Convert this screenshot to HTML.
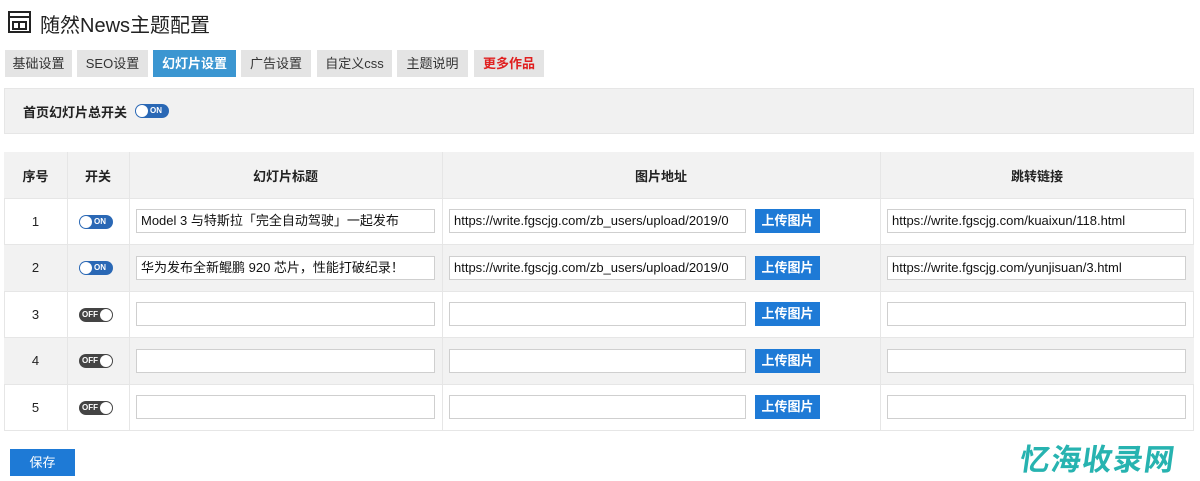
<!DOCTYPE html>
<html><head><meta charset="utf-8"><style>
*{box-sizing:border-box;margin:0;padding:0}
body{width:1200px;height:481px;background:#fff;font-family:"Liberation Sans","Noto Sans CJK SC",sans-serif;color:#222;position:relative;overflow:hidden}
.a{position:absolute}
.tab{position:absolute;top:50px;height:27px;background:#e4e4e4;font-size:13px;line-height:27px;text-align:center;color:#333}
.row{position:absolute;left:4px;width:1190px;height:47px;border-top:1px solid #e6e6e6}
.g{background:#f2f2f2}
.vl{position:absolute;top:152px;height:279px;width:1px;background:#e6e6e6}
.inp{position:absolute;height:24px;background:#fff;border:1px solid #cfcfcf;font-size:13px;line-height:22px;padding-left:4px;white-space:nowrap;overflow:hidden;color:#111}
.btn{position:absolute;height:24px;width:65px;background:#1e7ad6;color:#fff;font-size:13px;font-weight:bold;line-height:24px;text-align:center}
.num{position:absolute;left:0;width:63px;text-align:center;font-size:13px;top:15px}
.on,.off{position:absolute;left:75px;top:16px;width:34px;height:14px;border-radius:7px}
.on{background:#2a68b5}
.on:before{content:"";position:absolute;left:1px;top:1px;width:12px;height:12px;border-radius:6px;background:#fff}
.on:after{content:"ON";position:absolute;left:15px;top:1px;font-size:8px;font-weight:bold;color:#fff;line-height:12px}
.off{background:#444}
.off:before{content:"";position:absolute;right:1px;top:1px;width:12px;height:12px;border-radius:6px;background:#fff}
.off:after{content:"OFF";position:absolute;left:3px;top:1px;font-size:8px;font-weight:bold;color:#fff;line-height:12px}
</style></head><body>
<svg class="a" style="left:8px;top:11px" width="23" height="22" viewBox="0 0 23 22"><rect x="1" y="1" width="21" height="20" fill="none" stroke="#222" stroke-width="2"/><rect x="1" y="5" width="21" height="2" fill="#222"/><path d="M5 11h13v7H5zM11 11v7" fill="none" stroke="#222" stroke-width="2"/></svg>
<div class="a" style="left:40px;top:9px;font-size:20px;color:#222">随然News主题配置</div>
<div class="tab" style="left:5px;width:67px">基础设置</div>
<div class="tab" style="left:77px;width:71px">SEO设置</div>
<div class="tab" style="left:153px;width:83px;background:#3b96d1;color:#fff;font-weight:bold">幻灯片设置</div>
<div class="tab" style="left:241px;width:70px">广告设置</div>
<div class="tab" style="left:317px;width:75px">自定义css</div>
<div class="tab" style="left:397px;width:71px">主题说明</div>
<div class="tab" style="left:474px;width:70px;color:#e02020;font-weight:bold">更多作品</div>
<div class="a" style="left:4px;top:88px;width:1190px;height:46px;background:#f1f1f1;border:1px solid #e6e6e6"></div>
<div class="a" style="left:23px;top:102px;font-size:13px;font-weight:bold">首页幻灯片总开关</div>
<div class="on" style="left:135px;top:104px"></div>
<div class="a" style="left:4px;top:152px;width:1190px;height:279px;border:1px solid #e6e6e6"></div>
<div class="row g" style="top:152px;height:46px;border-top:none;font-size:13px;font-weight:bold">
<div class="a" style="left:0;width:63px;text-align:center;top:14px">序号</div>
<div class="a" style="left:63px;width:62px;text-align:center;top:14px">开关</div>
<div class="a" style="left:125px;width:313px;text-align:center;top:14px">幻灯片标题</div>
<div class="a" style="left:438px;width:438px;text-align:center;top:14px">图片地址</div>
<div class="a" style="left:876px;width:314px;text-align:center;top:14px">跳转链接</div>
</div>
<div class="row" style="top:198px"><div class="num">1</div><div class="on"></div></div>
<div class="row g" style="top:244px"><div class="num">2</div><div class="on"></div></div>
<div class="row" style="top:291px"><div class="num">3</div><div class="off"></div></div>
<div class="row g" style="top:337px"><div class="num">4</div><div class="off"></div></div>
<div class="row" style="top:384px"><div class="num">5</div><div class="off"></div></div>
<div class="vl" style="left:67px"></div><div class="vl" style="left:129px"></div><div class="vl" style="left:442px"></div><div class="vl" style="left:880px"></div>

<div class="inp" style="left:136px;top:209px;width:299px">Model 3 与特斯拉「完全自动驾驶」一起发布</div>
<div class="inp" style="left:449px;top:209px;width:297px">https://write.fgscjg.com/zb_users/upload/2019/0</div>
<div class="btn" style="left:755px;top:209px">上传图片</div>
<div class="inp" style="left:887px;top:209px;width:299px">https://write.fgscjg.com/kuaixun/118.html</div>

<div class="inp" style="left:136px;top:256px;width:299px">华为发布全新鲲鹏 920 芯片，性能打破纪录！</div>
<div class="inp" style="left:449px;top:256px;width:297px">https://write.fgscjg.com/zb_users/upload/2019/0</div>
<div class="btn" style="left:755px;top:256px">上传图片</div>
<div class="inp" style="left:887px;top:256px;width:299px">https://write.fgscjg.com/yunjisuan/3.html</div>

<div class="inp" style="left:136px;top:302px;width:299px"></div><div class="inp" style="left:449px;top:302px;width:297px"></div><div class="btn" style="left:755px;top:302px">上传图片</div><div class="inp" style="left:887px;top:302px;width:299px"></div>
<div class="inp" style="left:136px;top:349px;width:299px"></div><div class="inp" style="left:449px;top:349px;width:297px"></div><div class="btn" style="left:755px;top:349px">上传图片</div><div class="inp" style="left:887px;top:349px;width:299px"></div>
<div class="inp" style="left:136px;top:395px;width:299px"></div><div class="inp" style="left:449px;top:395px;width:297px"></div><div class="btn" style="left:755px;top:395px">上传图片</div><div class="inp" style="left:887px;top:395px;width:299px"></div>

<div class="a" style="left:10px;top:449px;width:65px;height:27px;background:#1e7ad6;color:#fff;font-size:13px;line-height:27px;text-align:center">保存</div>
<div class="a" style="left:1020px;top:443px;font-size:30px;font-weight:bold;color:#27b3b0;letter-spacing:1px;line-height:36px;transform:skewX(-8deg)">忆海收录网</div>
</body></html>
